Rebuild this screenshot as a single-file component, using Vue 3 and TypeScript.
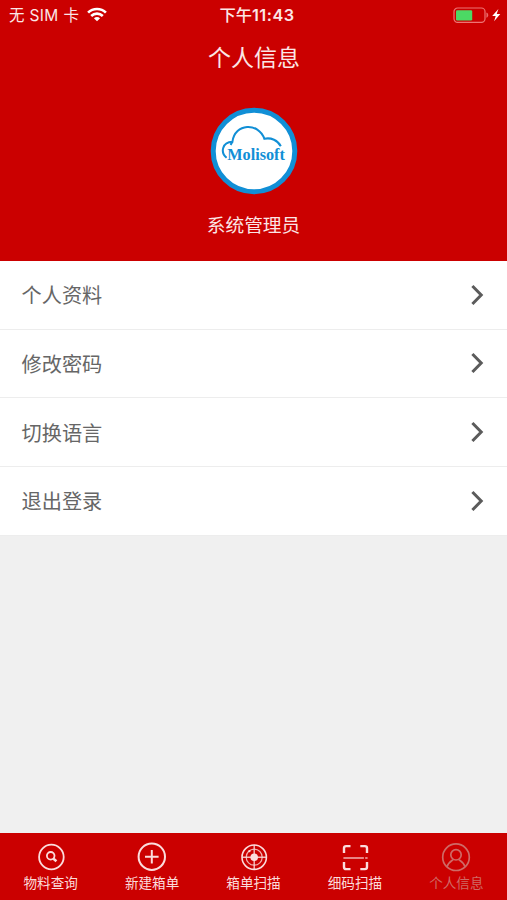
<script setup lang="ts">
import { ref } from 'vue'

interface Tab {
  id: string
  label: string
}

const rows: string[] = ['个人资料', '修改密码', '切换语言', '退出登录']

const tabs: Tab[] = [
  { id: 'query', label: '物料查询' },
  { id: 'create', label: '新建箱单' },
  { id: 'boxscan', label: '箱单扫描' },
  { id: 'codescan', label: '细码扫描' },
  { id: 'profile', label: '个人信息' },
]

const current = ref('profile')
</script>

<template>
  <div class="screen">
    <header class="hero">
      <div class="status">
        <div class="carrier">
          <span>无 SIM 卡</span>
          <svg class="wifi" viewBox="0 0 20 15" width="20" height="15">
            <g fill="none" stroke="#fff" stroke-width="2.7">
              <path d="M1.1 5.6C6 .8 14 .8 18.9 5.6" />
              <path d="M4.2 9C7.5 5.9 12.5 5.9 15.8 9" />
            </g>
            <path d="M6.9 11.2Q10 8.7 13.1 11.2L10 14.3Z" fill="#fff" />
          </svg>
        </div>
        <div class="clock">下午<span class="digits">11:43</span></div>
        <div class="power">
          <svg viewBox="0 0 50 18" width="50" height="18">
            <rect x="1" y="1" width="31" height="14.4" rx="3.6" fill="none" stroke="#ee7474" stroke-width="1.2" />
            <rect x="3" y="3.2" width="16.2" height="10.2" rx="1.2" fill="#4cd964" />
            <path d="M33.8 5.8q2.4 2.3 0 4.6z" fill="#ee7474" stroke="#ee7474" stroke-width=".6" />
            <path d="M45.4 2 39.2 9h3.5l-1.6 5.2 6.2-7.2h-3.6z" fill="#fff" />
          </svg>
        </div>
      </div>
      <h1 class="title">个人信息</h1>
      <svg class="avatar" viewBox="0 0 88 88" width="88" height="88">
        <circle cx="44" cy="44" r="40.8" fill="#fff" stroke="#118fd6" stroke-width="5" />
        <path
          d="M16.6 50.8C10.2 45.5 12 35.2 22.4 34.8C24.8 16 48.5 15 54.4 31.8C61 30.2 68 33.5 70.8 39.3M22.4 34.8L20.6 38"
          fill="none"
          stroke="#118fd6"
          stroke-width="2"
        />
        <text class="brand" x="17.3" y="52.6" textLength="57.6" lengthAdjust="spacingAndGlyphs">Molisoft</text>
      </svg>
      <p class="name">系统管理员</p>
    </header>

    <main class="menu">
      <a v-for="row in rows" :key="row" class="row">
        <span>{{ row }}</span>
        <svg viewBox="0 0 14 22" width="14" height="22">
          <path d="M1.4 2 10.2 11 1.4 20" fill="none" stroke="#5b5b5b" stroke-width="3" />
        </svg>
      </a>
    </main>

    <nav class="tabs">
      <a
        v-for="tab in tabs"
        :key="tab.id"
        class="tab"
        :class="{ active: tab.id === current }"
        @click="current = tab.id"
      >
        <svg viewBox="0 0 32 32" width="32" height="32" fill="none" stroke="currentColor">
          <template v-if="tab.id === 'query'">
            <circle cx="16.4" cy="16" r="12.3" stroke-width="1.8" />
            <circle cx="15.7" cy="14.8" r="3.8" stroke-width="1.8" />
            <path d="M18.2 17.6 21.4 20.3" stroke-width="2.6" />
          </template>
          <template v-else-if="tab.id === 'create'">
            <circle cx="15.8" cy="15.7" r="13.2" stroke-width="2" />
            <path d="M15.8 9v13.6M9 15.8h13.6" stroke-width="2" />
          </template>
          <template v-else-if="tab.id === 'boxscan'">
            <circle cx="16.2" cy="16.2" r="12.2" stroke-width="1.6" />
            <circle cx="16.2" cy="16.2" r="8" stroke-width="1.2" opacity=".8" />
            <path d="M16.2 4v24.4M4 16.2h24.4" stroke-width="1.4" opacity=".85" />
            <circle cx="16.2" cy="16.2" r="3.8" fill="currentColor" stroke="none" />
            <circle cx="11.4" cy="10.2" r="1.1" fill="currentColor" stroke="none" />
          </template>
          <template v-else-if="tab.id === 'codescan'">
            <path
              d="M5 12V7.2q0-2.1 2.1-2.1h4.4M21.3 5.1h4.6q2.1 0 2.1 2.1V12M28 21v5q0 2.1-2.1 2.1h-4.6M11.5 28.1H7.1Q5 28.1 5 26v-5"
              stroke-width="2.4"
            />
            <path d="M4.4 17h20.5M26.2 17h2.4" stroke-width="2.2" opacity=".6" />
          </template>
          <template v-else>
            <circle cx="16" cy="16.2" r="13.3" stroke-width="1.7" />
            <circle cx="16" cy="13.8" r="5.2" stroke-width="1.7" />
            <path d="M7 25.8C8.4 21.2 11.2 20 13.2 18.6M18.8 18.6C20.8 20 23.6 21.2 25 25.8" stroke-width="1.7" />
          </template>
        </svg>
        <span>{{ tab.label }}</span>
      </a>
    </nav>
  </div>
</template>

<style>
body {
  background: #f0f0f0;
}
</style>

<style scoped>
.screen {
  display: flex;
  flex-direction: column;
  height: 900px;
  background: #f0f0f0;
  font-family: Inter, "Noto Sans CJK SC", sans-serif;
  overflow: hidden;
}

.hero {
  display: flex;
  flex-direction: column;
  align-items: center;
  flex: none;
  height: 261px;
  background: #cb0000;
  color: #fbe6e6;
}

.status {
  display: grid;
  grid-template-columns: 1fr auto 1fr;
  align-items: center;
  width: 100%;
  height: 31px;
  box-sizing: border-box;
  padding: 0 4px 0 9px;
  font-size: 15.5px;
  line-height: 31px;
}

.carrier {
  display: flex;
  align-items: center;
  gap: 8px;
  letter-spacing: 0.35px;
  white-space: nowrap;
}

.wifi {
  margin-top: -2px;
}

.clock {
  margin-right: -2px;
  font-size: 16.3px;
  font-weight: 500;
}

.digits {
  font-weight: 600;
  letter-spacing: 0.5px;
}

.power {
  display: flex;
  justify-content: flex-end;
}

.title {
  margin: 10px 0 0;
  padding-left: 1px;
  font-size: 23px;
  font-weight: 400;
  line-height: 34px;
}

.avatar {
  margin-top: 31.6px;
}

.brand {
  fill: #118fd6;
  font-family: "Liberation Serif", serif;
  font-size: 16px;
  font-weight: 700;
}

.name {
  margin: 17.4px 0 0;
  font-size: 18.7px;
  line-height: 28px;
}

.menu {
  display: flex;
  flex-direction: column;
  flex: 1;
}

.row {
  display: flex;
  align-items: center;
  justify-content: space-between;
  height: 68.65px;
  box-sizing: border-box;
  padding: 0 22px 0 21.5px;
  border-bottom: 1px solid #ededed;
  background: #fff;
  color: #666;
  font-size: 20.2px;
}

.tabs {
  display: flex;
  flex: none;
  height: 67px;
  background: #cb0000;
}

.tab {
  display: flex;
  flex: 1;
  flex-direction: column;
  align-items: center;
  padding-top: 8px;
  color: #fbdcdc;
  font-size: 13.6px;
  line-height: 20px;
}

.tab.active {
  color: #cf6a66;
}
</style>
